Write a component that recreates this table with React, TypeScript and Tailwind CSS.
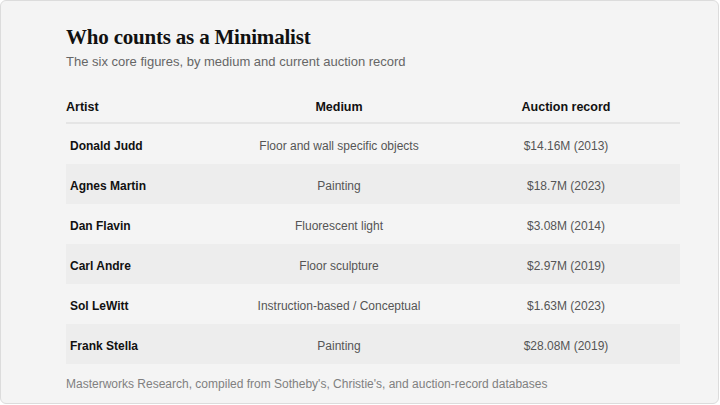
import React from "react";

const rows = [
  ["Donald Judd", "Floor and wall specific objects", "$14.16M (2013)"],
  ["Agnes Martin", "Painting", "$18.7M (2023)"],
  ["Dan Flavin", "Fluorescent light", "$3.08M (2014)"],
  ["Carl Andre", "Floor sculpture", "$2.97M (2019)"],
  ["Sol LeWitt", "Instruction-based / Conceptual", "$1.63M (2023)"],
  ["Frank Stella", "Painting", "$28.08M (2019)"],
];

export default function App() {
  return (
    <div className="w-[720px] h-[405px] bg-white">
      <div
        className="w-[719px] h-[404px] bg-[#f4f4f4] border border-[#dcdcdc] rounded-[6px] pl-[65px] pt-[23px]"
        style={{ fontFamily: '"Liberation Sans", Arial, sans-serif' }}
      >
        <h1
          className="text-[21px] leading-[26px] font-bold text-[#111] tracking-[-0.2px]"
          style={{ fontFamily: '"Liberation Serif", "Times New Roman", serif' }}
        >
          Who counts as a Minimalist
        </h1>
        <p className="text-[13px] leading-[18px] text-[#666] mt-[3px]">
          The six core figures, by medium and current auction record
        </p>
        <div className="mt-[19px] w-[614px]">
          <div className="grid grid-cols-[160px_226px_228px] h-[34px] items-center pt-[2px] border-b-2 border-[#e5e5e5] text-[12.5px] font-bold text-[#111]">
            <div>Artist</div>
            <div className="text-center">Medium</div>
            <div className="text-center">Auction record</div>
          </div>
          {rows.map((r, i) => (
            <div
              key={r[0]}
              className={
                "grid grid-cols-[160px_226px_228px] h-[40px] items-center pt-[3px] text-[12px] " +
                (i % 2 === 1 ? "bg-[#ededed]" : "")
              }
            >
              <div className="pl-[4px] font-bold text-[#111]">{r[0]}</div>
              <div className="text-center text-[#555]">{r[1]}</div>
              <div className="text-center text-[#555]">{r[2]}</div>
            </div>
          ))}
        </div>
        <p className="text-[12px] leading-[16px] text-[#808080] mt-[12px]">
          Masterworks Research, compiled from Sotheby's, Christie's, and auction-record databases
        </p>
      </div>
    </div>
  );
}
